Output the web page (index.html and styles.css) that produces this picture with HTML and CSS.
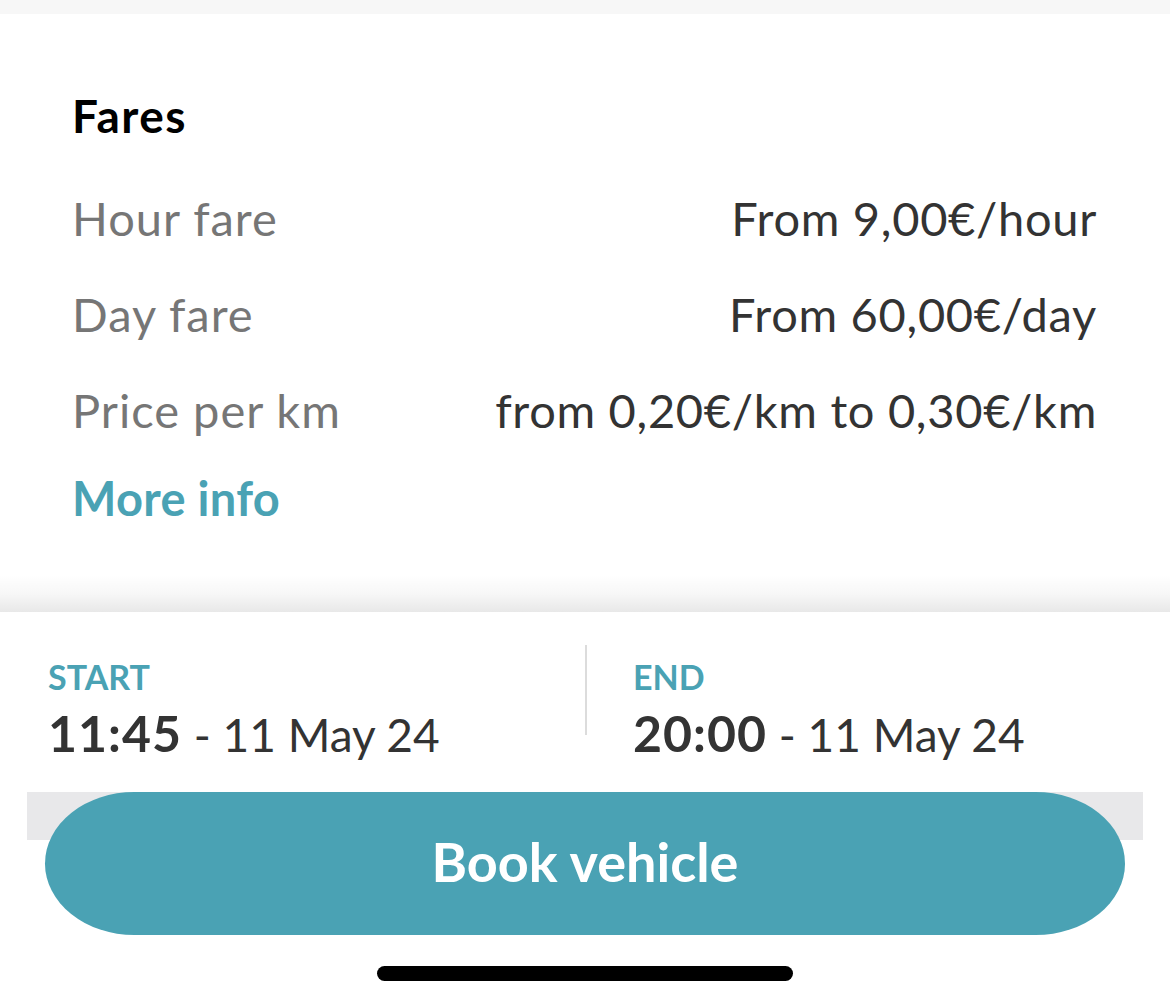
FILE: index.html
```html
<!DOCTYPE html>
<html lang="en">
<head>
<meta charset="utf-8">
<title>Fares</title>
<link rel="stylesheet" href="styles.css">
</head>
<body>
<div class="page">
  <div class="topbar"></div>
  <section class="fares">
    <h2 class="fares-title">Fares</h2>
    <div class="fare-row"><span class="fare-label">Hour fare</span><span class="fare-value">From 9,00€/hour</span></div>
    <div class="fare-row"><span class="fare-label">Day fare</span><span class="fare-value">From 60,00€/day</span></div>
    <div class="fare-row"><span class="fare-label">Price per km</span><span class="fare-value">from 0,20€/km to 0,30€/km</span></div>
    <a class="more-info" href="#">More info</a>
  </section>
  <div class="sheet-shadow"></div>
  <section class="sheet">
    <div class="times">
      <div class="time-col">
        <div class="time-label">START</div>
        <div class="time-value"><b>11:45</b> - 11 May 24</div>
      </div>
      <div class="divider"></div>
      <div class="time-col end">
        <div class="time-label">END</div>
        <div class="time-value"><b>20:00</b> - 11 May 24</div>
      </div>
    </div>
    <div class="cta">
      <button class="book-btn">Book vehicle</button>
    </div>
    <div class="home-indicator"></div>
  </section>
</div>
</body>
</html>
```
FILE: styles.css
```css
* { box-sizing: border-box; }
html, body { margin: 0; padding: 0; background: #fff; }
body { font-family: "Lato", "Noto Sans", sans-serif; }
.page { width: 1170px; height: 1005px; overflow: hidden; display: flex; flex-direction: column; }
.topbar { height: 14px; background: #f7f7f7; flex: none; }
.fares { padding: 76px 73px 0 72px; height: 561px; flex: none; }
.fares-title { margin: 0 0 28px; font-size: 46px; font-weight: 700; color: #000; line-height: 52px; letter-spacing: 1.5px; }
.fare-row { display: flex; justify-content: space-between; align-items: center; height: 96px; font-size: 47px; line-height: 54px; }
.fare-label { color: #767676; letter-spacing: 1px; }
.fare-value { color: #333; letter-spacing: 0.7px; }
.more-info { display: block; margin-top: 13px; font-size: 47px; font-weight: 700; color: #4aa2b4; text-decoration: none; line-height: 54px; letter-spacing: 0.3px; }
.sheet-shadow { height: 37px; flex: none; background: linear-gradient(to bottom, rgba(0,0,0,0) 0%, rgba(0,0,0,0.03) 50%, rgba(0,0,0,0.09) 100%); }
.sheet { flex: 1; background: #fff; display: flex; flex-direction: column; }
.times { display: flex; padding: 45px 0 0 48px; height: 180px; }
.time-col { width: 537px; }
.time-col.end { padding-left: 46px; }
.divider { width: 2px; height: 90px; margin-top: -12px; background: #dcdcdc; }
.time-label { color: #4aa2b4; font-size: 34px; font-weight: 700; line-height: 40px; }
.time-value { color: #333; font-size: 46px; line-height: 56px; margin-top: 8px; }
.time-value b { font-weight: 700; font-size: 50px; letter-spacing: 1px; }
.cta { margin: 0 27px; padding: 0 18px; background: linear-gradient(to bottom, #e8e8ea 0, #e8e8ea 48px, transparent 48px); }
.book-btn { display: block; width: 100%; height: 143px; border: 0; border-radius: 90px / 72px; background: #4aa2b4; color: #fff; font-family: "Lato", sans-serif; font-size: 54px; font-weight: 700; padding: 0 0 4px; }
.home-indicator { width: 416px; height: 15px; border-radius: 8px; background: #000; margin: 31px auto 0; }
```
